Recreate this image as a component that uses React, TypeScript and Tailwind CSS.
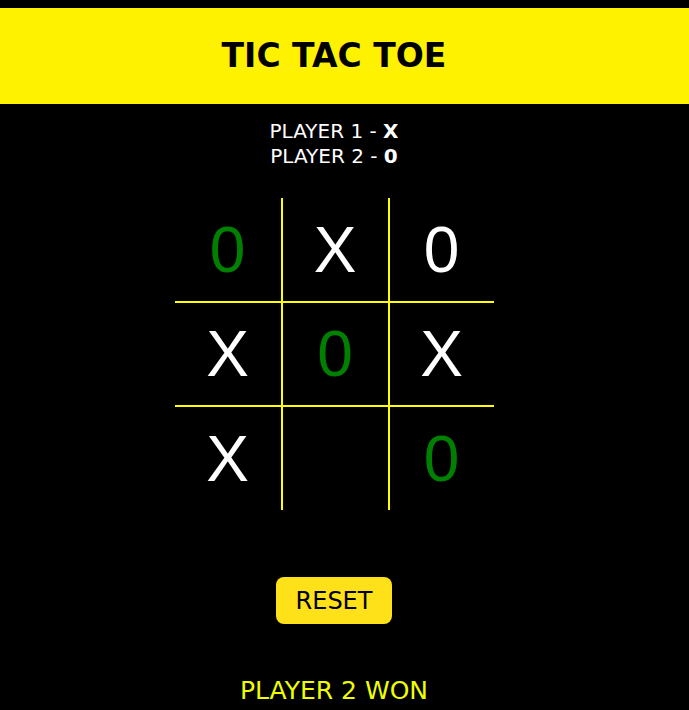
import React from "react";

type Mark = { v: string; win?: boolean };

const BOARD: Mark[] = [
  { v: "0", win: true }, { v: "X" }, { v: "0" },
  { v: "X" }, { v: "0", win: true }, { v: "X" },
  { v: "X" }, { v: "" }, { v: "0", win: true },
];

const App: React.FC = () => {
  return (
    <div className="min-h-[710px] bg-black pt-2 text-white font-['DejaVu_Sans',sans-serif]">
      {/* Header */}
      <header className="h-[96px] bg-[#fff200]">
        <div className="w-[668px] h-full flex items-center justify-center">
          <h1 className="text-[33px] font-bold text-black">TIC TAC TOE</h1>
        </div>
      </header>

      <main className="w-[668px] flex flex-col items-center">
        {/* Players */}
        <div className="mt-[15px] text-center text-[20px] leading-[25px]">
          <p>
            PLAYER 1 - <span className="font-bold">X</span>
          </p>
          <p>
            PLAYER 2 - <span className="font-bold">0</span>
          </p>
        </div>

        {/* Board */}
        <div className="mt-[29px] grid grid-cols-[106px_105px_104px] grid-rows-[103px_102px_103px] gap-[2px] bg-[#ffff00]">
          {BOARD.map((cell, i) => (
            <div
              key={i}
              className={`bg-black flex items-center justify-center text-[64px] font-['Liberation_Sans',sans-serif] ${
                cell.win ? "text-[#008000]" : "text-white"
              }`}
            >
              {cell.v}
            </div>
          ))}
        </div>

        {/* Reset */}
        <button className="mt-[67px] w-[116px] h-[47px] rounded-lg bg-[#ffe11a] text-black text-[24px]">
          RESET
        </button>

        {/* Result */}
        <p className="mt-[53px] text-[25px] leading-[28px] text-[#eeff00]">PLAYER 2 WON</p>
      </main>
    </div>
  );
};

export default App;
